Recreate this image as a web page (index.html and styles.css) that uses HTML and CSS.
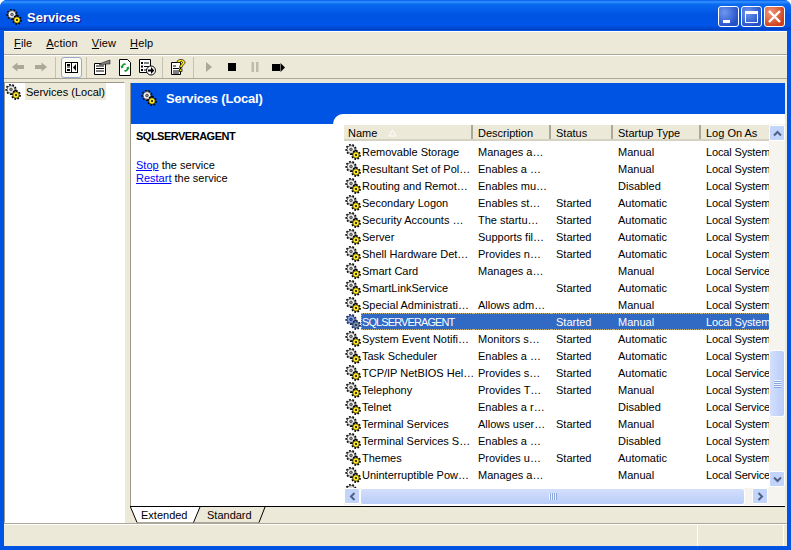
FILE: index.html
```html
<!DOCTYPE html>
<html lang="en">
<head>
    <meta charset="UTF-8">
    <title>Services</title>
    <link rel="stylesheet" href="styles.css">
</head>
<body>
    <svg class="defs" width="0" height="0">
        <symbol id="gears" viewBox="0 0 16 16">
            <circle cx="6" cy="5.5" r="4.6" fill="none" stroke="#000" stroke-width="2" stroke-dasharray="1.7 1.5"/>
            <circle cx="6" cy="5.5" r="3.9" fill="#f4f4f4" stroke="#222" stroke-width="0.7"/>
            <circle cx="6" cy="5.5" r="1.4" fill="#8c8c8c" stroke="#222" stroke-width="0.6"/>
            <circle cx="11" cy="11" r="3.9" fill="none" stroke="#000" stroke-width="2" stroke-dasharray="1.6 1.4"/>
            <circle cx="11" cy="11" r="3.3" fill="#ffe81a" stroke="#000" stroke-width="0.7"/>
            <circle cx="11" cy="11" r="1" fill="#000"/>
        </symbol>
        <symbol id="gears-sel" viewBox="0 0 16 16">
            <circle cx="6" cy="5.5" r="4.6" fill="none" stroke="#10205c" stroke-width="2" stroke-dasharray="1.7 1.5"/>
            <circle cx="6" cy="5.5" r="3.9" fill="#8ea8dc" stroke="#10205c" stroke-width="0.7"/>
            <circle cx="6" cy="5.5" r="1.4" fill="#3c5ca8" stroke="#10205c" stroke-width="0.6"/>
            <circle cx="11" cy="11" r="3.9" fill="none" stroke="#10205c" stroke-width="2" stroke-dasharray="1.6 1.4"/>
            <circle cx="11" cy="11" r="3.3" fill="#7a90a0" stroke="#10205c" stroke-width="0.7"/>
            <circle cx="11" cy="11" r="1" fill="#10205c"/>
        </symbol>
    </svg>

    <div class="window">
        <div class="titlebar">
            <svg class="ic"><use href="#gears"/></svg>
            <span class="title">Services</span>
            <div class="winbtns">
                <span class="winbtn"><svg width="21" height="21"><rect x="5" y="14" width="7" height="3" fill="#fff"/></svg></span>
                <span class="winbtn"><svg width="21" height="21"><path d="M4.5 5.5h12v11h-12z" fill="none" stroke="#fff" stroke-width="1"/><rect x="4" y="5" width="13" height="3" fill="#fff"/></svg></span>
                <span class="winbtn close"><svg width="21" height="21"><path d="M5 5l11 11M16 5L5 16" stroke="#fff" stroke-width="2.4"/></svg></span>
            </div>
        </div>

        <div class="client">
            <div class="menubar">
                <span class="menu"><u>F</u>ile</span>
                <span class="menu"><u>A</u>ction</span>
                <span class="menu"><u>V</u>iew</span>
                <span class="menu"><u>H</u>elp</span>
            </div>

            <div class="toolbar">
                <span class="tool"><svg width="16" height="16"><path d="M2 8l5.500-4.500V6h6.500v4H7.500v2.500z" fill="#aca899"/></svg></span>
                <span class="tool"><svg width="16" height="16"><path d="M14 8L8.500 3.500V6H2v4h6.500v2.500z" fill="#aca899"/></svg></span>
                <span class="sep"></span>
                <span class="tool active"><svg width="13" height="11"><rect x="0.5" y="0.5" width="12" height="10" fill="#fff" stroke="#000"/><path d="M6.500 1v9" stroke="#000"/><path d="M2 2h3v2H2zM2 4.500h3v1H2zM2 7h3v2H2z" fill="#000"/><path d="M11 2v7L8 5.500z" fill="#000"/></svg></span>
                <span class="sep"></span>
                <span class="tool"><svg width="18" height="16"><path d="M1.500 4.500h11v11h-11z" fill="#fff" stroke="#000"/><path d="M3 7h8M3 9.500h8M3 12h8" stroke="#000"/><path d="M6 5l8-3 3-1v4l-3 0-7 1z" fill="#808080" stroke="#000" stroke-width="0.5"/></svg></span>
                <span class="tool"><svg width="14" height="17"><path d="M1.500 0.500h8l3 3v13h-11z" fill="#fff" stroke="#000"/><path d="M7 4a4 4 0 0 0-3.500 3l-1-.5 1 3 2.500-1.500-1-.5a2.500 2.500 0 0 1 3-1.500z" fill="#0a9a28"/><path d="M7 13a4 4 0 0 0 3.500-3l1 .5-1-3-2.500 1.500 1 .5a2.500 2.500 0 0 1-3 1.500z" fill="#0a9a28"/></svg></span>
                <span class="tool"><svg width="17" height="17"><path d="M0.500 0.500h11v13h-11z" fill="#fff" stroke="#000"/><path d="M2 3h2v2H2zM2 6.500h2v2H2zM2 10h2v2H2z" fill="#000"/><path d="M5 4h5M5 7.500h5M5 11h3" stroke="#000"/><circle cx="12" cy="11.500" r="4.500" fill="#fff" stroke="#000"/><path d="M9 10.500h3V8l3.300 3.500-3.300 3.500v-2.500H9z" fill="#000"/></svg></span>
                <span class="sep"></span>
                <span class="tool"><svg width="16" height="16"><path d="M1.500 3.500h9v12h-9z" fill="#fff" stroke="#000"/><path d="M3 7h3M3 9.500h6M3 12h6M3 14h6" stroke="#000"/><path d="M7 3.500C7 1 9 .5 11 .5s4 1 4 3-3 2.500-3 5H9.500c0-3 3-3.500 3-5 0-1.500-2.500-1.200-2.700 0z" fill="#ffe81a" stroke="#000" stroke-width="0.7"/><rect x="9.500" y="10" width="2.500" height="2.500" fill="#ffe81a" stroke="#000" stroke-width="0.7"/></svg></span>
                <span class="sep wide"></span>
                <span class="tool"><svg width="16" height="16"><path d="M5 3l6 5-6 5z" fill="#aca899"/></svg></span>
                <span class="tool"><svg width="16" height="16"><rect x="4" y="4" width="8" height="8" fill="#000"/></svg></span>
                <span class="tool"><svg width="16" height="16"><path d="M4.500 3h2.500v10H4.500zM9 3h2.500v10H9z" fill="#bdbbab"/></svg></span>
                <span class="tool"><svg width="16" height="16"><rect x="2" y="5" width="8" height="7" fill="#000"/><path d="M10.500 4l4.500 4.500-4.500 4.500z" fill="#000"/></svg></span>
            </div>

            <div class="main">
                <div class="tree">
                    <div class="tree-item">
                        <svg class="ic"><use href="#gears"/></svg>
                        <span class="tree-label">Services (Local)</span>
                    </div>
                </div>

                <div class="right">
                    <div class="pane">
                        <div class="pane-head">
                            <svg class="ic"><use href="#gears"/></svg>
                            <span>Services (Local)</span>
                        </div>
                        <div class="pane-body">
                            <div class="desc">
                                <div class="desc-name">SQLSERVERAGENT</div>
                                <div><a href="#">Stop</a> the service</div>
                                <div><a href="#">Restart</a> the service</div>
                            </div>
                            <div class="listwrap">
                                <div class="listgrid">
                                    <div class="list">
                                        <div class="list-head">
                                            <span class="col">Name<svg class="sort" width="9" height="8"><path d="M4.500 1L8 7H1z" fill="none" stroke="#fff"/></svg></span>
                                            <span class="col">Description</span>
                                            <span class="col">Status</span>
                                            <span class="col">Startup Type</span>
                                            <span class="col">Log On As</span>
                                        </div>
                                        <div class="rows">
                                            <div class="row"><svg class="ic"><use href="#gears"/></svg><span>Removable Storage</span><span>Manages a…</span><span></span><span>Manual</span><span>Local System</span></div>
                                            <div class="row"><svg class="ic"><use href="#gears"/></svg><span>Resultant Set of Pol…</span><span>Enables a …</span><span></span><span>Manual</span><span>Local System</span></div>
                                            <div class="row"><svg class="ic"><use href="#gears"/></svg><span>Routing and Remot…</span><span>Enables mu…</span><span></span><span>Disabled</span><span>Local System</span></div>
                                            <div class="row"><svg class="ic"><use href="#gears"/></svg><span>Secondary Logon</span><span>Enables st…</span><span>Started</span><span>Automatic</span><span>Local System</span></div>
                                            <div class="row"><svg class="ic"><use href="#gears"/></svg><span>Security Accounts …</span><span>The startu…</span><span>Started</span><span>Automatic</span><span>Local System</span></div>
                                            <div class="row"><svg class="ic"><use href="#gears"/></svg><span>Server</span><span>Supports fil…</span><span>Started</span><span>Automatic</span><span>Local System</span></div>
                                            <div class="row"><svg class="ic"><use href="#gears"/></svg><span>Shell Hardware Det…</span><span>Provides n…</span><span>Started</span><span>Automatic</span><span>Local System</span></div>
                                            <div class="row"><svg class="ic"><use href="#gears"/></svg><span>Smart Card</span><span>Manages a…</span><span></span><span>Manual</span><span>Local Service</span></div>
                                            <div class="row"><svg class="ic"><use href="#gears"/></svg><span>SmartLinkService</span><span></span><span>Started</span><span>Automatic</span><span>Local System</span></div>
                                            <div class="row"><svg class="ic"><use href="#gears"/></svg><span>Special Administrati…</span><span>Allows adm…</span><span></span><span>Manual</span><span>Local System</span></div>
                                            <div class="row selected"><svg class="ic"><use href="#gears-sel"/></svg><span class="caps">SQLSERVERAGENT</span><span></span><span>Started</span><span>Manual</span><span>Local System</span></div>
                                            <div class="row"><svg class="ic"><use href="#gears"/></svg><span>System Event Notifi…</span><span>Monitors s…</span><span>Started</span><span>Automatic</span><span>Local System</span></div>
                                            <div class="row"><svg class="ic"><use href="#gears"/></svg><span>Task Scheduler</span><span>Enables a …</span><span>Started</span><span>Automatic</span><span>Local System</span></div>
                                            <div class="row"><svg class="ic"><use href="#gears"/></svg><span>TCP/IP NetBIOS Hel…</span><span>Provides s…</span><span>Started</span><span>Automatic</span><span>Local Service</span></div>
                                            <div class="row"><svg class="ic"><use href="#gears"/></svg><span>Telephony</span><span>Provides T…</span><span>Started</span><span>Manual</span><span>Local System</span></div>
                                            <div class="row"><svg class="ic"><use href="#gears"/></svg><span>Telnet</span><span>Enables a r…</span><span></span><span>Disabled</span><span>Local Service</span></div>
                                            <div class="row"><svg class="ic"><use href="#gears"/></svg><span>Terminal Services</span><span>Allows user…</span><span>Started</span><span>Manual</span><span>Local System</span></div>
                                            <div class="row"><svg class="ic"><use href="#gears"/></svg><span>Terminal Services S…</span><span>Enables a …</span><span></span><span>Disabled</span><span>Local System</span></div>
                                            <div class="row"><svg class="ic"><use href="#gears"/></svg><span>Themes</span><span>Provides u…</span><span>Started</span><span>Automatic</span><span>Local System</span></div>
                                            <div class="row"><svg class="ic"><use href="#gears"/></svg><span>Uninterruptible Pow…</span><span>Manages a…</span><span></span><span>Manual</span><span>Local Service</span></div>
                                            <div class="row"><svg class="ic"><use href="#gears"/></svg></div>
                                        </div>
                                    </div>
                                    <div class="vbar">
                                        <span class="sbtn"><svg width="9" height="7"><path d="M1 5.500l3.500-3.500 3.500 3.500" fill="none" stroke="#4d6185" stroke-width="2"/></svg></span>
                                        <span class="vtrack"><span class="vthumb"><span class="grip"></span></span></span>
                                        <span class="sbtn"><svg width="9" height="7"><path d="M1 1.500l3.500 3.500 3.500-3.500" fill="none" stroke="#4d6185" stroke-width="2"/></svg></span>
                                    </div>
                                    <div class="hbar">
                                        <span class="sbtn"><svg width="7" height="9"><path d="M5.500 1L2 4.500 5.500 8" fill="none" stroke="#4d6185" stroke-width="2"/></svg></span>
                                        <span class="hthumb"><span class="hgrip"></span></span>
                                        <span class="sbtn"><svg width="7" height="9"><path d="M1.500 1L5 4.500 1.500 8" fill="none" stroke="#4d6185" stroke-width="2"/></svg></span>
                                    </div>
                                    <div class="corner"></div>
                                </div>
                            </div>
                        </div>
                    </div>
                    <div class="tabs">
                        <svg class="tab-lines" width="140" height="17">
                            <path d="M0.500 0l6.500 15.500h57L70 0z" fill="#fff"/>
                            <path d="M7 15.500h57M64 15.500h65" fill="none" stroke="#aca899"/>
                            <path d="M0.500 0L7 15.500M70 0l-6.500 15.500M135 0l-6 15.500" fill="none" stroke="#000"/>
                        </svg>
                        <span class="tab">Extended</span>
                        <span class="tab">Standard</span>
                    </div>
                </div>
            </div>

            <div class="statusbar">
                <span class="status-main"></span>
                <span class="status-cell"></span>
            </div>
        </div>
    </div>
</body>
</html>
```

FILE: styles.css
```css
* {
    box-sizing: border-box;
}
html, body {
    margin: 0;
    background-color: #fff;
}
.defs {
    position: absolute;
}
.window {
    display: flex;
    flex-direction: column;
    width: 791px;
    height: 550px;
    padding: 0 4px 4px 4px;
    overflow: hidden;
    border-radius: 7px 7px 0 0;
    background-color: #0054e3;
    font-family: "Liberation Sans", Arial, sans-serif;
    font-size: 11px;
    color: #000;
}
.ic {
    display: block;
    flex: none;
    width: 16px;
    height: 16px;
}
.titlebar {
    display: flex;
    align-items: center;
    flex: none;
    height: 30px;
    margin: 0 -4px;
    padding: 3px 6px 0 6px;
    background: linear-gradient(#0058ee 0%, #3593ff 6%, #0a6af0 14%, #0054e3 50%, #0055e8 85%, #0040c0 100%);
}
.title {
    margin-left: 5px;
    padding-top: 1px;
    font-size: 13px;
    font-weight: bold;
    color: #fff;
    text-shadow: 1px 1px 0 #0f1089;
}
.winbtns {
    display: flex;
    gap: 2px;
    margin-left: auto;
}
.winbtn {
    display: block;
    width: 21px;
    height: 21px;
    border: 1px solid #fff;
    border-radius: 3px;
    overflow: hidden;
    background: radial-gradient(circle at 30% 30%, #6f97ee, #2450c8 75%);
}
.winbtn svg {
    display: block;
    margin: -1px;
}
.winbtn.close {
    background: radial-gradient(circle at 30% 30%, #ee9a7c, #d0401c 75%);
}
.client {
    display: flex;
    flex-direction: column;
    flex: 1;
    min-height: 0;
    margin-top: 1px;
    background-color: #ece9d8;
}
.menubar {
    display: flex;
    align-items: center;
    flex: none;
    height: 24px;
    padding-left: 3px;
    border-bottom: 1px solid #aca899;
    box-shadow: inset 0 1px 0 #fff;
    letter-spacing: 0.15px;
}
.menu {
    padding: 0 7px;
}
.toolbar {
    display: flex;
    align-items: center;
    flex: none;
    height: 24px;
    padding-left: 2px;
    border-top: 1px solid #fff;
    border-bottom: 1px solid #aca899;
}
.tool {
    display: flex;
    align-items: center;
    justify-content: center;
    width: 23px;
    height: 21px;
}
.tool.active {
    width: 21px;
    margin: 0 1px 0 2px;
    border: 1px solid #98a8c8;
    border-radius: 3px;
    background-color: #fafaf5;
}
.sep {
    width: 1px;
    height: 21px;
    margin: 0 3px;
    background-color: #c5c2b0;
}
.sep.wide {
    margin-left: 4px;
}
.main {
    display: flex;
    flex: 1;
    min-height: 0;
    gap: 5px;
    padding-top: 3px;
    padding-right: 2px;
}
.tree {
    flex: none;
    width: 121px;
    border: 1px solid #9d9a8c;
    border-right-color: #fff;
    border-bottom-color: #fff;
    background-color: #fff;
}
.tree-item {
    display: flex;
    align-items: center;
    height: 17px;
}
.tree-item .ic {
    margin-top: 1px;
}
.tree-label {
    height: 17px;
    margin-left: 4px;
    padding: 0 1px;
    line-height: 19px;
    background-color: #ece9d8;
}
.right {
    display: flex;
    flex-direction: column;
    flex: 1;
    min-width: 0;
    padding-top: 1px;
}
.pane {
    display: flex;
    flex-direction: column;
    flex: 1;
    min-height: 0;
    background-color: #0054e3;
    border-left: 1px solid #9d9a8c;
}
.pane-head {
    display: flex;
    align-items: center;
    flex: none;
    height: 31px;
    padding-left: 10px;
    font-size: 13px;
    font-weight: bold;
    letter-spacing: -0.2px;
    color: #fff;
}
.pane-head .ic {
    margin-top: -1px;
}
.pane-head span {
    margin-left: 9px;
}
.pane-body {
    display: flex;
    flex: 1;
    min-height: 0;
}
.desc {
    flex: none;
    width: 202px;
    margin-top: 10px;
    padding: 6px 5px;
    background-color: #fff;
    line-height: 13px;
}
.desc-name {
    margin-bottom: 16px;
    font-weight: bold;
    letter-spacing: -0.5px;
}
.desc a {
    color: #0000ff;
}
.listwrap {
    flex: 1;
    min-width: 0;
    padding: 10px 0 0 11px;
    border-radius: 10px 0 0 0;
    background-color: #fff;
}
.listgrid {
    display: grid;
    grid-template-columns: 425px 16px;
    grid-template-rows: 364px 17px;
}
.list {
    overflow: hidden;
}
.list-head {
    display: grid;
    grid-template-columns: 129px 78px 62px 88px 68px;
    height: 16px;
    margin-top: 1px;
    border-bottom: 2px solid #d6d2c2;
    background-color: #ece9d8;
    line-height: 16px;
}
.col {
    display: block;
    padding-left: 5px;
    border-right: 2px solid #aca899;
    white-space: nowrap;
    overflow: hidden;
}
.col:first-child {
    padding-left: 4px;
}
.col:last-child {
    border-right: none;
}
.sort {
    margin-left: 11px;
}
.rows {
    margin-top: 2px;
}
.row {
    display: grid;
    grid-template-columns: 17px 112px 78px 62px 88px 68px;
    height: 17px;
    line-height: 17px;
    white-space: nowrap;
}
.row span {
    padding-top: 1px;
    padding-left: 5px;
    overflow: hidden;
}
.row span:first-of-type {
    padding-left: 1px;
}
.row span:last-child {
    letter-spacing: -0.15px;
}
.row .ic {
    margin: 1px 0 0 1px;
}
.row.selected span {
    padding-top: 0;
    border-top: 1px dotted #c9b67a;
    border-bottom: 1px dotted #c9b67a;
    line-height: 17px;
    background-color: #316ac5;
    color: #fff;
}
.row.selected span:first-of-type {
    border-left: 1px dotted #c9b67a;
    padding-left: 0;
}
.caps {
    letter-spacing: -0.9px;
}
.vbar {
    display: flex;
    flex-direction: column;
    padding: 1px 0;
    background-color: #f5f4ee;
}
.sbtn {
    display: flex;
    align-items: center;
    justify-content: center;
    flex: none;
    width: 16px;
    height: 16px;
    border: 1px solid #fff;
    border-radius: 2px;
    background-color: #c3d4fb;
}
.vtrack {
    display: block;
    flex: 1;
    padding-top: 209px;
}
.vthumb {
    display: flex;
    align-items: center;
    justify-content: center;
    width: 16px;
    height: 67px;
    border: 1px solid #fff;
    border-radius: 3px;
    background: linear-gradient(90deg, #d3dffc, #b9cdf9);
}
.grip {
    width: 7px;
    height: 8px;
    background: repeating-linear-gradient(#eef3ff 0 1px, #8ba5dc 1px 2px);
}
.hbar {
    display: flex;
    padding-right: 1px;
    background-color: #f5f4ee;
}
.hthumb {
    display: flex;
    align-items: center;
    justify-content: center;
    width: 385px;
    margin-right: 7px;
    border: 1px solid #fff;
    border-radius: 3px;
    background: linear-gradient(#d3dffc, #b9cdf9);
}
.hgrip {
    width: 8px;
    height: 7px;
    background: repeating-linear-gradient(90deg, #eef3ff 0 1px, #8ba5dc 1px 2px);
}
.corner {
    background-color: #f5f4ee;
}
.tabs {
    position: relative;
    display: flex;
    flex: none;
    height: 17px;
    padding-left: 11px;
    border-top: 1px solid #000;
    background-color: #ece9d8;
    line-height: 17px;
}
.tab {
    position: relative;
    width: 66px;
}
.tab-lines {
    position: absolute;
    top: 0;
    left: 0;
}
.statusbar {
    display: flex;
    flex: none;
    height: 23px;
    border-top: 1px solid #aca899;
    box-shadow: inset 0 1px 0 #fff;
}
.status-main {
    width: 694px;
    border-right: 1px solid #fff;
}
.status-cell {
    width: 86px;
    border-right: 1px solid #fff;
}
```
